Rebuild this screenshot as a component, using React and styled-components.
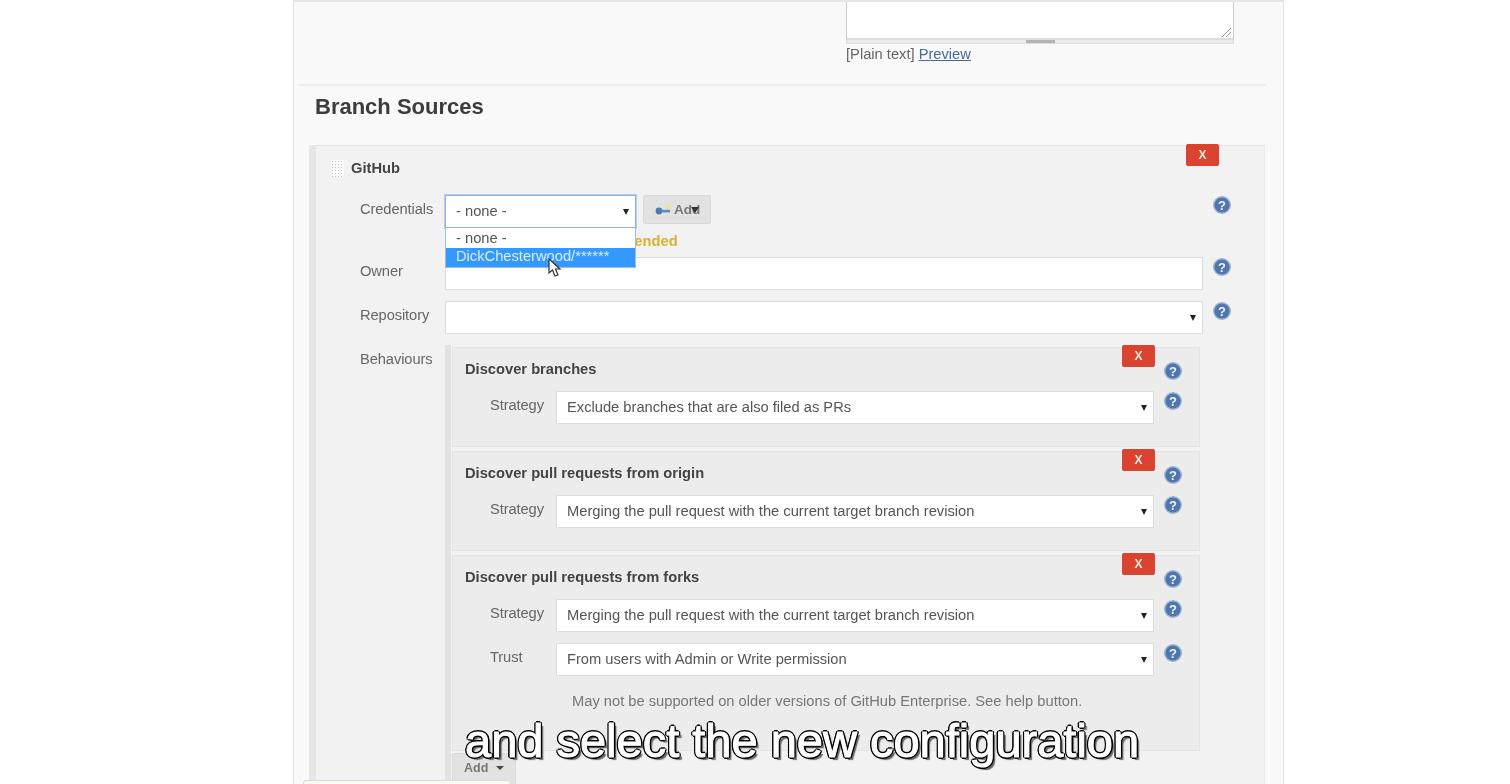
import React from 'react';
import styled, { createGlobalStyle } from 'styled-components';

const GlobalStyle = createGlobalStyle`
  html, body { margin: 0; padding: 0; background: #fff; }
  body { font-family: "Liberation Sans", Arial, sans-serif; font-size: 14.7px; color: #555; }
  * { box-sizing: border-box; }
`;

const Page = styled.div`
  position: relative;
  width: 1510px;
  height: 784px;
  overflow: hidden;
  background: #fff;
`;

const Frame = styled.div`
  width: 991px;
  height: 784px;
  margin-left: 293px;
  padding-left: 5px;
  overflow: hidden;
  background: #f9f9f9;
  border-left: 1px solid #e2e2e2;
  border-right: 1px solid #e2e2e2;
  border-top: 2px solid #e6e6e6;
  filter: blur(0.7px);
`;

const Description = styled.div`
  width: 388px;
  margin-left: 547px;
`;

const TextArea = styled.div`
  position: relative;
  height: 37px;
  background: #fff;
  border: 1px solid #ccc;
  border-top: none;
  border-bottom: none;
  box-shadow: inset 0 -1px 0 #ddd;
`;

const ResizeMark = styled.svg`
  position: absolute;
  right: 1px;
  bottom: 1px;
  width: 11px;
  height: 11px;
`;

const Grippie = styled.div`
  display: flex;
  justify-content: center;
  height: 5px;
  background: #ececec;
  border: 1px solid #ddd;
  &::after {
    content: '';
    width: 29px;
    height: 3px;
    background: #b4b4b4;
  }
`;

const PreviewLine = styled.div`
  margin-top: 2px;
  line-height: 16px;
  color: #666;
`;

const PreviewLink = styled.a`
  color: #47699b;
  text-decoration: underline;
`;

const Divider = styled.hr`
  width: 967px;
  height: 2px;
  margin: 22px 0 0;
  border: none;
  background: #eeeeee;
`;

const SectionTitle = styled.h2`
  margin: 7px 0 0 16px;
  font-size: 22px;
  line-height: 28px;
  font-weight: 700;
  color: #3c3c3c;
`;

const SourceOuter = styled.div`
  width: 956px;
  margin: 24px 0 0 10px;
  border-left: 7px solid #e6e6e6;
`;

const Source = styled.div`
  position: relative;
  height: 700px;
  padding: 13px 33px 0 15px;
  background: #f2f2f2;
  border-top: 1px solid #e3e3e3;
  border-right: 1px solid #ebebeb;
`;

const DeleteButton = styled.button`
  position: absolute;
  top: ${p => p.$top}px;
  right: ${p => p.$right}px;
  width: 33px;
  height: 22px;
  padding: 0;
  border: none;
  border-radius: 2px;
  background: #d9432f;
  color: #fbe6e0;
  font-family: inherit;
  font-size: 12px;
  font-weight: 700;
`;

const SourceHeader = styled.div`
  display: flex;
  align-items: center;
  gap: 7px;
  height: 18px;
  font-weight: 700;
  color: #444;
`;

const Grip = styled.div`
  width: 13px;
  height: 17px;
  background-color: #fafafa;
  background-image: radial-gradient(circle, #c4c4c4 0.8px, transparent 0.9px);
  background-size: 3px 3px;
`;

const FormGrid = styled.div`
  display: grid;
  grid-template-columns: ${p => p.$label}px 1fr 28px;
  row-gap: 11px;
  margin-left: ${p => p.$indent}px;
  margin-top: ${p => p.$top}px;
`;

const Label = styled.div`
  padding-top: 6px;
  line-height: 16px;
  color: #666;
  letter-spacing: -0.1px;
`;

const HelpCell = styled.div`
  display: flex;
  padding: 1px 0 0 10px;
`;

const SelectBox = styled.div`
  position: relative;
  display: flex;
  align-items: center;
  height: 33px;
  padding: 0 0 1px 10px;
  width: ${p => (p.$width ? `${p.$width}px` : 'auto')};
  background: #fff;
  border: 1px solid ${p => (p.$focused ? '#8fb4e0' : '#ddd')};
  box-shadow: ${p => (p.$focused ? '0 0 0 1px #b4cdec' : 'none')};
  color: #555;
  &::after {
    content: '';
    display: ${p => (p.$noCaret ? 'none' : 'block')};
    position: absolute;
    right: 6px;
    top: 13px;
    border-left: 3.5px solid transparent;
    border-right: 3.5px solid transparent;
    border-top: 6px solid #222;
  }
`;

const CredentialRow = styled.div`
  position: relative;
  display: flex;
  flex-wrap: wrap;
  gap: 0 7px;
`;

const AddCredential = styled.button`
  display: flex;
  align-items: center;
  gap: 3px;
  width: 68px;
  height: 29px;
  padding: 0 0 0 11px;
  background: #e2e2e2;
  border: 1px solid #d9d9d9;
  border-radius: 2px;
  font-family: inherit;
  font-size: 13.5px;
  font-weight: 700;
  color: #777;
`;

const InlineCaret = styled.span`
  width: 0;
  margin-left: -12px;
  border-left: 4px solid transparent;
  border-right: 4px solid transparent;
  border-top: 6px solid #333;
`;

const Warning = styled.div`
  flex-basis: 100%;
  height: 18px;
  padding: 5px 0 0 22px;
  line-height: 16px;
  font-weight: 700;
  white-space: nowrap;
  color: #d9b030;
`;

const Menu = styled.div`
  position: absolute;
  top: 33px;
  left: 0;
  width: 191px;
  background: #fff;
  border: 1px solid #9dbde6;
  border-top: none;
  z-index: 2;
`;

const MenuItem = styled.div`
  height: ${p => (p.$active ? 19 : 20)}px;
  padding-left: 10px;
  line-height: ${p => (p.$active ? 17 : 20)}px;
  background: ${p => (p.$active ? '#3399ff' : '#fff')};
  color: ${p => (p.$active ? '#dcecff' : '#555')};
`;

const Pointer = styled.svg`
  position: absolute;
  left: 103px;
  top: 63px;
  width: 14px;
  height: 20px;
  z-index: 3;
`;

const BehaviourPanel = styled.div`
  grid-column: 2 / 4;
  width: 755px;
  padding-top: 2px;
  padding-left: 1px;
  border-left: 6px solid #e2e2e2;
`;

const Behaviour = styled.div`
  position: relative;
  height: ${p => p.$height}px;
  margin-bottom: 4px;
  padding: 12px 17px 0 12px;
  background: #ececec;
  border: 1px solid #e4e4e4;
`;

const BehaviourTitle = styled.div`
  display: flex;
  justify-content: space-between;
  height: 18px;
  line-height: 18px;
  font-weight: 700;
  color: #444;
`;

const TitleHelp = styled.div`
  margin-top: 2px;
`;

const Note = styled.div`
  grid-column: 2 / 4;
  margin-top: 6px;
  padding-left: 16px;
  line-height: 16px;
  color: #777;
`;

const AddButton = styled.button`
  display: flex;
  align-items: center;
  gap: 8px;
  width: 64px;
  height: 34px;
  margin-top: -2px;
  padding: 0 0 4px 11px;
  background: #e2e2e2;
  border: 1px solid #dadada;
  border-radius: 2px;
  font-family: inherit;
  font-size: 12.5px;
  font-weight: 700;
  color: #777;
  &::after {
    content: '';
    border-left: 4px solid transparent;
    border-right: 4px solid transparent;
    border-top: 4px solid #444;
  }
`;

const Notice = styled.div`
  position: absolute;
  left: 303px;
  top: 780px;
  width: 208px;
  height: 20px;
  background: #f6fbf3;
  border: 1px solid #cfe3c6;
  border-radius: 3px;
`;

const Caption = styled.div`
  position: absolute;
  left: 465px;
  top: 714px;
  font-family: "Liberation Sans", Arial, sans-serif;
  font-size: 47px;
  line-height: 54px;
  white-space: nowrap;
  color: #fff;
  -webkit-text-stroke: 1px #fff;
  text-shadow:
    -1.8px 0 0 #000, 1.8px 0 0 #000, 0 -1.8px 0 #000, 0 1.8px 0 #000,
    -1.4px -1.4px 0 #000, 1.4px -1.4px 0 #000, -1.4px 1.4px 0 #000, 1.4px 1.4px 0 #000,
    3px 3px 1px #666;
  filter: blur(0.2px);
`;

const HelpIcon = () => (
  <svg width="18" height="18" viewBox="0 0 18 18">
    <circle cx="9" cy="9" r="9" fill="#9db3d3" />
    <circle cx="9" cy="9" r="7.6" fill="#4f76ad" />
    <text x="9" y="13.6" textAnchor="middle" fontFamily="Liberation Sans" fontSize="13" fontWeight="700" fill="#eef3fa">?</text>
  </svg>
);

const KeyIcon = () => (
  <svg width="16" height="12" viewBox="0 0 16 12">
    <circle cx="4" cy="7" r="3.4" fill="#4a7bb0" />
    <rect x="6" y="5.8" width="9" height="2.6" fill="#5e8cb8" />
    <circle cx="12.5" cy="2.5" r="2" fill="#f2e27a" />
  </svg>
);

const Row = ({ label, value }) => (
  <>
    <Label>{label}</Label>
    <SelectBox>{value}</SelectBox>
    <HelpCell><HelpIcon /></HelpCell>
  </>
);

const MERGE = 'Merging the pull request with the current target branch revision';

const BehaviourBlock = ({ title, height, children }) => (
  <Behaviour $height={height}>
    <DeleteButton $top={-3} $right={44}>X</DeleteButton>
    <BehaviourTitle>
      {title}
      <TitleHelp><HelpIcon /></TitleHelp>
    </BehaviourTitle>
    <FormGrid $label={66} $indent={25} $top={13}>{children}</FormGrid>
  </Behaviour>
);

const App = () => (
  <Page>
    <GlobalStyle />
    <Frame>
      <Description>
        <TextArea>
          <ResizeMark viewBox="0 0 11 11">
            <path d="M1 10 L10 1 M5 10 L10 5" stroke="#999" strokeWidth="1" />
          </ResizeMark>
        </TextArea>
        <Grippie />
        <PreviewLine>[Plain text] <PreviewLink>Preview</PreviewLink></PreviewLine>
      </Description>
      <Divider />
      <SectionTitle>Branch Sources</SectionTitle>
      <SourceOuter>
        <Source>
          <DeleteButton $top={-2} $right={45}>X</DeleteButton>
          <SourceHeader><Grip />GitHub</SourceHeader>
          <FormGrid $label={85} $indent={29} $top={18}>
            <Label>Credentials</Label>
            <CredentialRow>
              <SelectBox $width={191} $focused>- none -</SelectBox>
              <AddCredential><KeyIcon />Add<InlineCaret /></AddCredential>
              <Warning>Credentials are recommended</Warning>
              <Menu>
                <MenuItem>- none -</MenuItem>
                <MenuItem $active>DickChesterwood/******</MenuItem>
              </Menu>
              <Pointer viewBox="0 0 14 20">
                <path d="M1 1 L1 15 L4.5 12 L7 18 L10 17 L7.5 11 L12 11 Z" fill="#fff" stroke="#333" strokeWidth="1.2" />
              </Pointer>
            </CredentialRow>
            <HelpCell><HelpIcon /></HelpCell>

            <Label>Owner</Label>
            <SelectBox $noCaret />
            <HelpCell><HelpIcon /></HelpCell>

            <Row label="Repository" />

            <Label>Behaviours</Label>
            <BehaviourPanel>
              <BehaviourBlock title="Discover branches" height={100}>
                <Row label="Strategy" value="Exclude branches that are also filed as PRs" />
              </BehaviourBlock>
              <BehaviourBlock title="Discover pull requests from origin" height={100}>
                <Row label="Strategy" value={MERGE} />
              </BehaviourBlock>
              <BehaviourBlock title="Discover pull requests from forks" height={196}>
                <Row label="Strategy" value={MERGE} />
                <Row label="Trust" value="From users with Admin or Write permission" />
                <Label />
                <Note>May not be supported on older versions of GitHub Enterprise. See help button.</Note>
              </BehaviourBlock>
              <AddButton>Add</AddButton>
            </BehaviourPanel>
          </FormGrid>
        </Source>
      </SourceOuter>
    </Frame>
    <Notice />
    <Caption>and select the new configuration</Caption>
  </Page>
);

export default App;
